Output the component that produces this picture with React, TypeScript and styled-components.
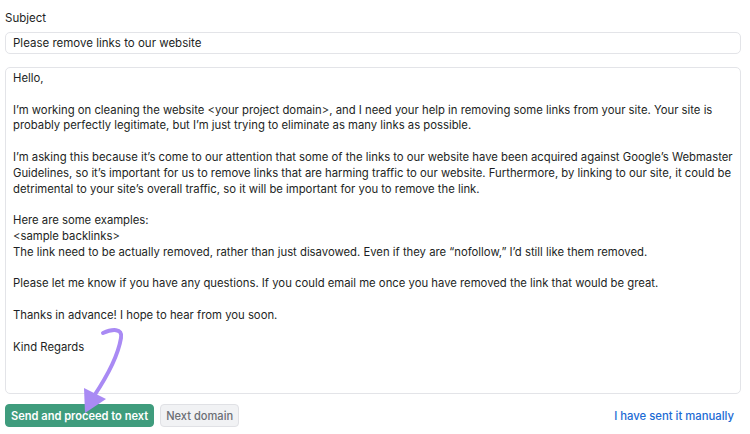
import styled, { createGlobalStyle } from "styled-components";

const GlobalStyle = createGlobalStyle`
  body {
    margin: 0;
    background: #ffffff;
    font-family: Inter, "Noto Sans", sans-serif;
    color: #1d1f24;
  }
`;

const Page = styled.div`
  position: relative;
  width: 750px;
  height: 434px;
  box-sizing: border-box;
  padding: 10px 9px 0 5px;
  display: flex;
  flex-direction: column;
`;

const Label = styled.div`
  font-size: 11.5px;
  line-height: 16px;
  margin-bottom: 6px;
`;

const SubjectInput = styled.div`
  height: 22px;
  box-sizing: border-box;
  border: 1px solid #e3e4e8;
  border-radius: 5px;
  padding: 0 7px;
  display: flex;
  align-items: center;
  font-size: 11.5px;
  margin-bottom: 13px;
`;

const Body = styled.div`
  height: 327px;
  box-sizing: border-box;
  border: 1px solid #e3e4e8;
  border-radius: 5px;
  padding: 3px 7px 2px;
  font-size: 11.3px;
  line-height: 15.8px;
  white-space: nowrap;
`;

const Line = styled.div`
  height: 15.8px;
`;

const Actions = styled.div`
  margin-top: 10px;
  display: flex;
  align-items: center;
  gap: 6px;
`;

const Button = styled.button<{ $primary?: boolean }>`
  height: 23px;
  box-sizing: border-box;
  padding: 0 5px;
  border-radius: 4px;
  font-family: Inter, "Noto Sans", sans-serif;
  font-size: 11.1px;
  font-weight: ${({ $primary }) => ($primary ? 600 : 500)};
  color: ${({ $primary }) => ($primary ? "#ffffff" : "#6b6e75")};
  background: ${({ $primary }) => ($primary ? "#3f9c7d" : "#f1f2f4")};
  border: 1px solid ${({ $primary }) => ($primary ? "#3f9c7d" : "#e0e1e5")};
`;

const LinkButton = styled.a`
  margin-left: auto;
  margin-right: 7px;
  font-size: 11.3px;
  font-weight: 500;
  color: #1c6bd4;
  text-decoration: none;
`;

const Arrow = styled.svg`
  position: absolute;
  left: 0;
  top: 0;
  pointer-events: none;
`;

const lines = [
  "Hello,",
  "",
  "I’m working on cleaning the website <your project domain>, and I need your help in removing some links from your site. Your site is",
  "probably perfectly legitimate, but I’m just trying to eliminate as many links as possible.",
  "",
  "I’m asking this because it’s come to our attention that some of the links to our website have been acquired against Google’s Webmaster",
  "Guidelines, so it’s important for us to remove links that are harming traffic to our website. Furthermore, by linking to our site, it could be",
  "detrimental to your site’s overall traffic, so it will be important for you to remove the link.",
  "",
  "Here are some examples:",
  "<sample backlinks>",
  "The link need to be actually removed, rather than just disavowed. Even if they are “nofollow,” I’d still like them removed.",
  "",
  "Please let me know if you have any questions. If you could email me once you have removed the link that would be great.",
  "",
  "Thanks in advance! I hope to hear from you soon.",
  "",
  "Kind Regards",
];

const App = () => {
  return (
    <>
      <GlobalStyle />
      <Page>
        <Label>Subject</Label>
        <SubjectInput>Please remove links to our website</SubjectInput>
        <Body>
          {lines.map((text, i) => (
            <Line key={i}>{text}</Line>
          ))}
        </Body>
        <Actions>
          <Button $primary>Send and proceed to next</Button>
          <Button>Next domain</Button>
          <LinkButton href="#">I have sent it manually</LinkButton>
        </Actions>
        <Arrow width="750" height="434" viewBox="0 0 750 434">
          <path
            d="M103 333 C112 329 123 328 121 338 C118 356 106 378 94 396"
            fill="none"
            stroke="#a98af4"
            strokeWidth="4"
            strokeLinecap="round"
          />
          <polygon points="84,388 106,399 85,413" fill="#a98af4" />
        </Arrow>
      </Page>
    </>
  );
};

export default App;
